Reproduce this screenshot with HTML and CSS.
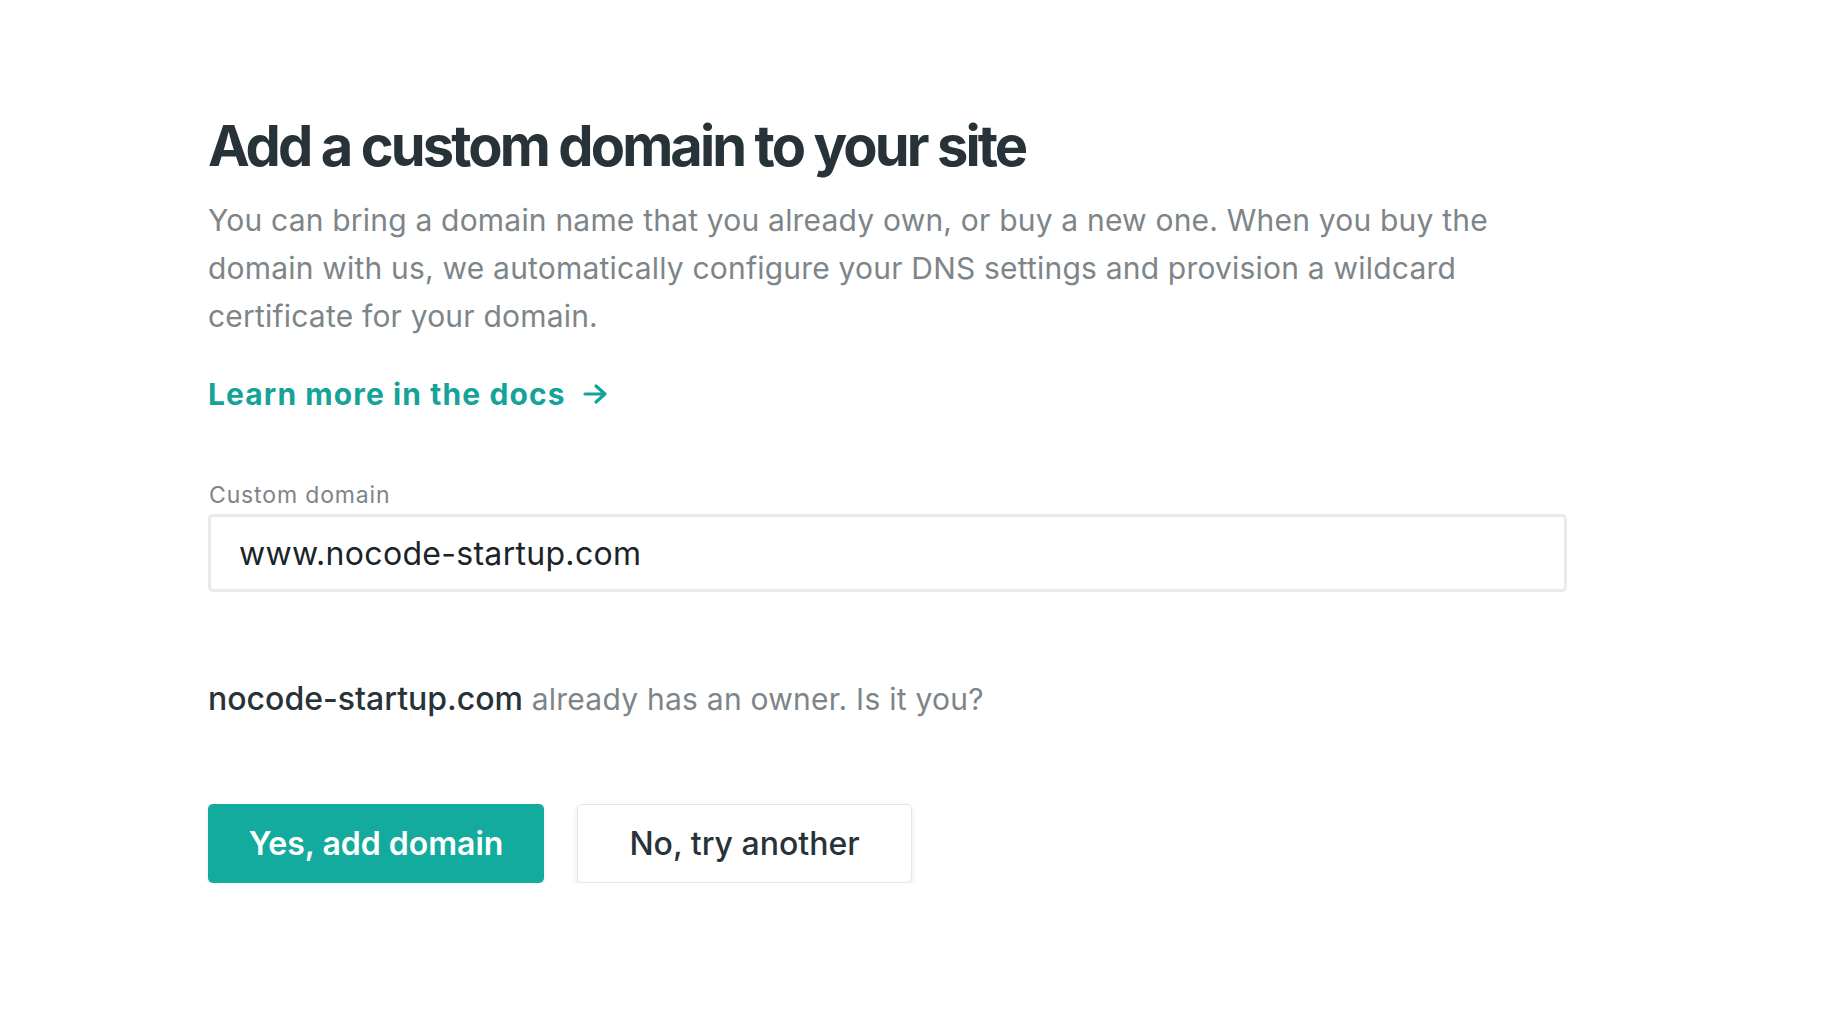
FILE: index.html
```html
<!DOCTYPE html>
<html lang="en">
<head>
<meta charset="utf-8">
<title>Add a custom domain</title>
<link rel="stylesheet" href="styles.css">
</head>
<body>
<main class="page">
  <h1 class="title">Add a custom domain to your site</h1>
  <p class="intro">You can bring a domain name that you already own, or buy a new one. When you buy the domain with us, we automatically configure your DNS settings and provision a wildcard certificate for your domain.</p>
  <a class="docs-link" href="#">Learn more in the docs <span class="arrow"><svg width="26" height="22" viewBox="0 0 26 22"><path d="M2 11H22M13 3l9 8-9 8" fill="none" stroke="currentColor" stroke-width="3.2" stroke-linecap="round" stroke-linejoin="round"/></svg></span></a>
  <div class="field">
    <label class="field-label" for="domain">Custom domain</label>
    <input class="field-input" id="domain" type="text" value="www.nocode-startup.com">
  </div>
  <p class="owner"><strong class="owner-domain">nocode-startup.com</strong> already has an owner. Is it you?</p>
  <div class="actions">
    <button class="btn btn-primary" type="button">Yes, add domain</button>
    <button class="btn btn-secondary" type="button">No, try another</button>
  </div>
</main>
</body>
</html>
```
FILE: styles.css
```css
html, body {
  margin: 0;
  padding: 0;
  background: #ffffff;
}
body {
  font-family: Inter, "Noto Sans", sans-serif;
  color: #2b3439;
}
.page {
  padding: 110px 0 0 208px;
  width: 1360px;
  display: flex;
  flex-direction: column;
  align-items: flex-start;
}
.title {
  margin: 0;
  font-size: 56px;
  font-weight: 700;
  letter-spacing: -2.9px;
  line-height: 72px;
  color: #273338;
}
.intro {
  margin: 14px 0 0;
  font-size: 30px;
  line-height: 48px;
  color: #7d8589;
  letter-spacing: 0.2px;
  width: 1330px;
}
.docs-link {
  margin-top: 34px;
  font-size: 30px;
  font-weight: 700;
  letter-spacing: 1.1px;
  color: #15a399;
  text-decoration: none;
  display: flex;
  align-items: center;
  gap: 17px;
  line-height: 40px;
}
.arrow {
  display: flex;
  align-items: center;
}
.field {
  margin-top: 66px;
  display: flex;
  flex-direction: column;
  width: 1359px;
}
.field-label {
  font-size: 23px;
  letter-spacing: 0.85px;
  color: #7d8589;
  line-height: 30px;
  margin-bottom: 4px;
  padding-left: 1px;
}
.field-input {
  box-sizing: border-box;
  height: 78px;
  width: 100%;
  border: 3px solid #e9eaeb;
  border-radius: 5px;
  padding: 0 28px;
  font-family: Inter, sans-serif;
  font-size: 32px;
  letter-spacing: 0.3px;
  color: #1a2428;
  outline: none;
  background: #fff;
}
.owner {
  margin: 87px 0 0;
  font-size: 30px;
  line-height: 40px;
  color: #7d8589;
  letter-spacing: 0.25px;
}
.owner-domain {
  font-size: 32px;
  font-weight: 500;
  letter-spacing: 0;
  color: #273338;
}
.actions {
  margin-top: 85px;
  display: flex;
  gap: 33px;
}
.btn {
  box-sizing: border-box;
  height: 79px;
  border-radius: 5px;
  font-family: Inter, sans-serif;
  font-size: 32px;
  padding: 0 30px;
  cursor: pointer;
}
.btn-primary {
  width: 336px;
  background: #12ab9d;
  color: #ffffff;
  border: none;
  font-weight: 600;
  box-shadow: 0 2px 4px rgba(0, 0, 0, 0.08);
}
.btn-secondary {
  width: 335px;
  background: #ffffff;
  color: #273338;
  border: 1px solid #e4e6e7;
  font-weight: 500;
  box-shadow: 0 3px 6px rgba(0, 0, 0, 0.1);
}
```
